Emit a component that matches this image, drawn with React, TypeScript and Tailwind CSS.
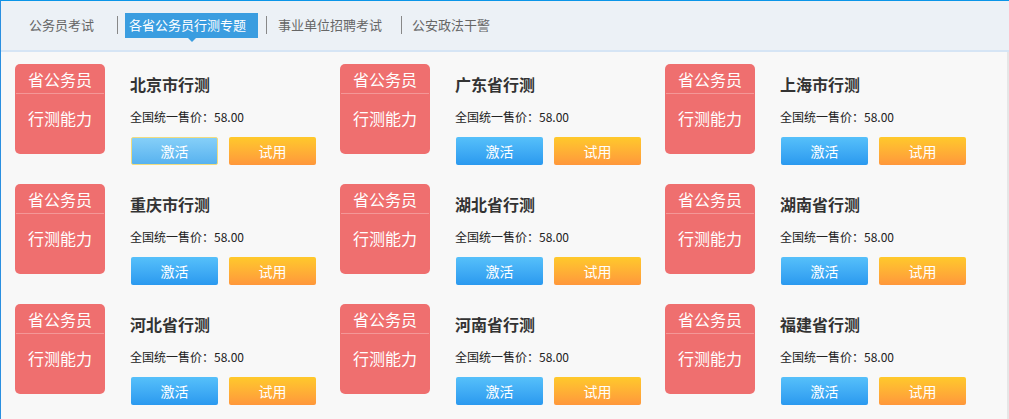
import React from "react";

const items = [
  "北京市行测",
  "广东省行测",
  "上海市行测",
  "重庆市行测",
  "湖北省行测",
  "湖南省行测",
  "河北省行测",
  "河南省行测",
  "福建省行测",
];

function Card({ title, hover }: { title: string; hover?: boolean }) {
  return (
    <div className="flex h-[90px] w-[300px]">
      <div className="flex h-[90px] w-[90px] shrink-0 flex-col rounded-[5px] bg-[#ef6f6f] text-white">
        <div className="flex h-[29px] items-center justify-center pt-[1px] text-[16px] leading-[20px]">省公务员</div>
        <div className="mx-[1px] h-px bg-[#f49797]" />
        <div className="flex justify-center pt-[13px] text-[16px] leading-[22px]">行测能力</div>
      </div>
      <div className="ml-[25px] flex flex-col pt-[10px]">
        <div className="h-[20px] text-[16px] font-bold leading-[20px] text-[#333]">{title}</div>
        <div className="mt-[15px] text-[12px] leading-[16px] text-[#222]">全国统一售价：58.00</div>
        <div className="ml-[1px] mt-[12px] flex gap-[11px]">
          {hover ? (
            <button className="h-[28px] w-[87px] rounded-[2px] border border-[#f0dc80] bg-gradient-to-b from-[#85cff8] to-[#57b2ef] text-[14px] text-white">
              激活
            </button>
          ) : (
            <button className="h-[28px] w-[87px] rounded-[2px] bg-gradient-to-b from-[#56c0fa] to-[#2a99ef] text-[14px] text-white">
              激活
            </button>
          )}
          <button className="h-[28px] w-[87px] rounded-[2px] bg-gradient-to-b from-[#ffc92b] to-[#ff973b] text-[14px] text-white">
            试用
          </button>
        </div>
      </div>
    </div>
  );
}

export default function App() {
  return (
    <div
      className="h-[419px] w-[1009px] overflow-hidden border-l border-t border-l-[#2a8fe0] border-t-[#0a95e8] bg-[#f8f8f8]"
      style={{ fontFamily: '"Noto Sans CJK SC", "Noto Sans", sans-serif' }}
    >
      <div className="flex h-[49px] items-center bg-[#ecf1f6] pb-[1px] text-[13px] text-[#666]">
        <span className="ml-[28px]">公务员考试</span>
        <span className="ml-[23px] h-[18px] w-px bg-[#888]" />
        <div className="relative ml-[7px] flex h-[25px] items-center bg-[#3a9de0] pl-[4px] pr-[12px] text-white">
          各省公务员行测专题
          <span className="absolute left-[63px] top-[25px] h-0 w-0 border-x-[4px] border-t-[4px] border-x-transparent border-t-[#3a9de0]" />
        </div>
        <span className="ml-[8px] h-[18px] w-px bg-[#888]" />
        <span className="ml-[11px]">事业单位招聘考试</span>
        <span className="ml-[19px] h-[18px] w-px bg-[#888]" />
        <span className="ml-[10px]">公安政法干警</span>
      </div>
      <div className="h-[2px] bg-[#d6e5f5]" />
      <div className="h-full border-r-2 border-r-[#e6e6e6]">
        <div className="grid grid-cols-[325px_325px_325px] auto-rows-[90px] gap-y-[30px] pl-[14px] pt-[12px]">
          {items.map((t, i) => (
            <Card key={t} title={t} hover={i === 0} />
          ))}
        </div>
      </div>
    </div>
  );
}
